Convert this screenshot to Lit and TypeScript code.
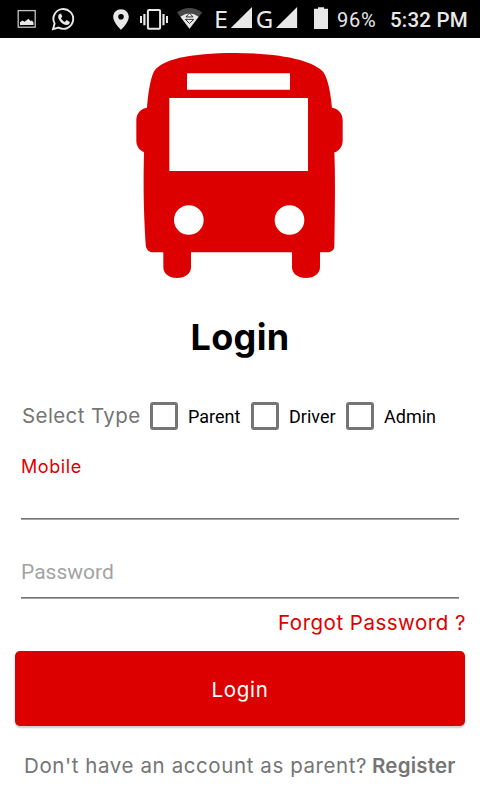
import { LitElement, html, css } from "lit";
import { customElement } from "lit/decorators.js";

@customElement("status-bar")
class StatusBar extends LitElement {
  static styles = css`
    :host { display: flex; height: 38px; background: #000; color: #e8e8e8; font-family: Roboto, sans-serif; align-items: center; }
    .icons { flex: none; width: 334px; height: 38px; display: block; }
    .net { font: 24px "Noto Sans", sans-serif; }
    .battery { width: 56px; font-size: 20px; line-height: 38px; padding: 1px 0 0 3px; box-sizing: border-box; white-space: nowrap; letter-spacing: .75px; }
    .clock { font-size: 20.5px; font-weight: 500; line-height: 38px; padding-top: 1px; white-space: nowrap; letter-spacing: .2px; }
  `;
  render() {
    return html`
      <svg class="icons" viewBox="0 0 334 38" fill="#e8e8e8">
        <rect x="18.2" y="10.6" width="17" height="16.6" fill="none" stroke="#c4c4c4" stroke-width="1.3" />
        <path d="M20 25V22.3L22.4 20.5L24.5 21.7L28.5 18.8L30.5 21L32 20.5L33.5 22.5V25Z" />
        <path d="M53 29.2L54.6 23.6A9.9 9.9 0 1 1 58.6 27.6Z" fill="none" stroke="#e8e8e8" stroke-width="1.9" />
        <path d="M60.1 13.7C58.7 14.1 58 15.5 58.2 17.2C59 21 62.8 24.7 66.5 25C68.5 24.9 69.8 23.8 69.8 21.9L66.6 20L64.9 22C63.4 21.3 61.8 19.8 61 18.2L62.3 16.6L61.1 13.8Z" />
        <path fill-rule="evenodd" d="M121 9.2C116.7 9.2 113.2 12.6 113.2 16.9C113.2 22.3 121 29.7 121 29.7S128.8 22.3 128.8 16.9C128.8 12.6 125.3 9.2 121 9.2ZM121 13.9A2.8 2.8 0 1 1 121 19.5A2.8 2.8 0 0 1 121 13.9Z" />
        <rect x="147.9" y="10" width="12.2" height="18.8" rx="1" fill="none" stroke="#e8e8e8" stroke-width="2" />
        <path d="M140 16h2v7h-2zM143.3 14h2.2v11.3h-2.2zM162.4 14h2.2v11.3h-2.2zM166 16h2v7h-2z" />
        <path d="M177 12.4Q189.5 3.5 202.2 12.4L189.5 28.8Z" fill="#484848" />
        <path d="M180.4 16.8Q189.5 9.5 198.6 16.8L189.5 28.8Z" />
        <path d="M189.5 13L186 16.9H193ZM185.3 19.4H193.7L189.5 23.4Z" fill="none" stroke="#222" stroke-width=".9" />
        <text class="net" x="213.9" y="28" textLength="14" lengthAdjust="spacingAndGlyphs">E</text>
        <path d="M230.8 28L252 7V28Z" />
        <text class="net" x="255.7" y="28" textLength="17.5" lengthAdjust="spacingAndGlyphs">G</text>
        <path d="M276 28L297.1 7V28Z" />
        <path d="M318 7.3H324V8.8H328V29H314V8.8H318Z" />
      </svg>
      <span class="battery">96%</span>
      <span class="clock">5:32 PM</span>
    `;
  }
}

@customElement("app-root")
class AppRoot extends LitElement {
  static styles = css`
    :host { display: flex; flex-direction: column; width: 480px; height: 800px; background: #fff; font-family: Inter, sans-serif; color: #757575; overflow: hidden; white-space: nowrap; }
    .bus { display: block; width: 240px; height: 250px; margin: 2px auto 0; flex: none; }
    h1 { margin: 22px 0 0; height: 50px; line-height: 50px; font-size: 36px; font-weight: 700; text-align: center; color: #000; letter-spacing: .3px; }
    .types { display: flex; align-items: center; height: 40px; margin: 34px 0 0 22px; }
    .prompt { font-size: 20.5px; width: 128px; letter-spacing: .4px; padding-bottom: 2px; }
    .option { display: flex; align-items: center; color: #000; font: 18px Roboto, sans-serif; }
    .parent { width: 101px; }
    .driver { width: 95px; }
    .box { box-sizing: border-box; width: 28px; height: 28px; border: 3px solid #757575; border-radius: 3px; margin-right: 10px; }
    .form { margin: 0 21px; }
    .line { height: 2px; background: linear-gradient(#757575 50%, #a5a5a5 50%); }
    .mobile { height: 82px; padding-top: 20px; box-sizing: border-box; color: #dd0000; font-size: 18px; line-height: 22px; letter-spacing: .6px; }
    .password { height: 77px; padding-top: 39px; box-sizing: border-box; color: #a3a3a3; font: 21px/26px Roboto, sans-serif; }
    .forgot { color: #dd0000; text-align: right; margin: 10px 14px 0 0; font-size: 20.5px; line-height: 28px; letter-spacing: .5px; }
    .login { margin: 14px 15px 0; height: 75px; border: 0; border-radius: 5px; background: #dd0000; color: #fff; font: 400 20.5px Inter, sans-serif; letter-spacing: .7px; box-shadow: 0 2px 2px #0003; flex: none; padding: 2px 0 0; }
    .signup { display: flex; margin: 26px 0 0 24px; font-size: 20.5px; line-height: 28px; }
    .question { width: 348px; letter-spacing: .59px; }
    .register { font-weight: 600; letter-spacing: .2px; }
  `;
  render() {
    return html`
      <status-bar></status-bar>
      <svg class="bus" viewBox="0 0 720 750">
        <path fill="#dd0000" fill-rule="evenodd" d="M81 203C84 165 89 125 100 98C120 58 210 39 345 39C485 39 580 62 610 96C626 120 632 165 636 203C654 205 668 220 668 240V302C668 320 656 334 643 337C646 400 645 500 643 620C642 630 635 637 618 637H600V682C600 701 582 714 558 714C534 714 516 701 516 682V637H213V682C213 701 195 714 171 714C147 714 130 701 130 682V637H96C85 636 77 626 77 613C70 500 70 430 72 336C60 332 49 320 49 302V240C49 220 63 205 81 203ZM201 100V149H510V100ZM148 174V393H564V174ZM162 540A44.5 44.5 0 1 0 251 540A44.5 44.5 0 1 0 162 540ZM464 540A44.5 44.5 0 1 0 553 540A44.5 44.5 0 1 0 464 540Z" />
      </svg>
      <h1>Login</h1>
      <div class="types">
        <span class="prompt">Select Type</span>
        <label class="option parent"><span class="box"></span>Parent</label>
        <label class="option driver"><span class="box"></span>Driver</label>
        <label class="option"><span class="box"></span>Admin</label>
      </div>
      <div class="form">
        <div class="mobile">Mobile</div>
        <div class="line"></div>
        <div class="password">Password</div>
        <div class="line"></div>
      </div>
      <div class="forgot">Forgot Password ?</div>
      <button class="login">Login</button>
      <div class="signup"><span class="question">Don't have an account as parent?</span><span class="register">Register</span></div>
    `;
  }
}
